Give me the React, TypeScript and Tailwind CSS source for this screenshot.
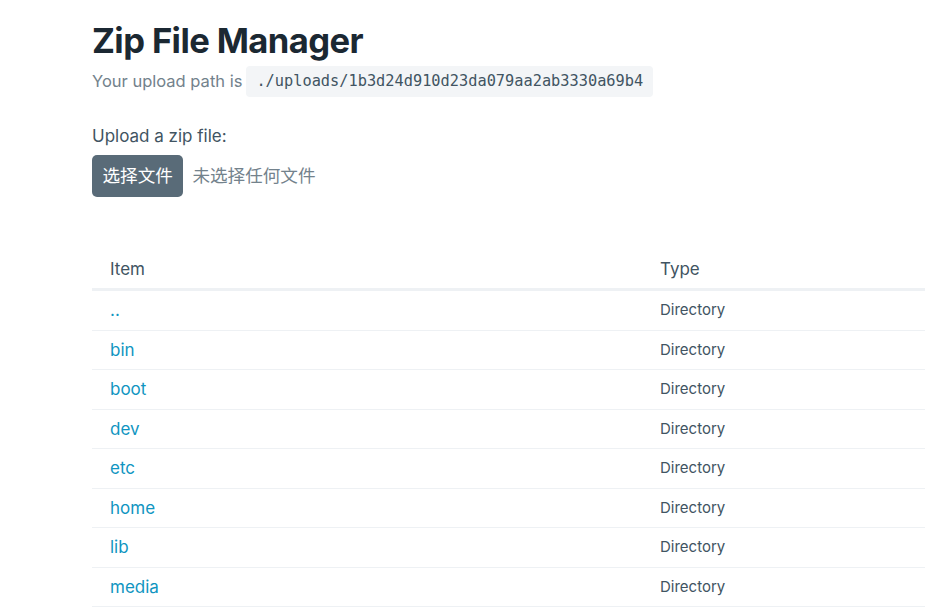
const rows = ["..", "bin", "boot", "dev", "etc", "home", "lib", "media"];

export default function App() {
  return (
    <div
      className="min-h-screen w-full overflow-hidden bg-white text-[#415462]"
      style={{ fontFamily: 'Inter, "Noto Sans CJK SC", sans-serif' }}
    >
      <div className="w-[940px] pl-[92px] pt-[16px]">
        <h1 className="text-[34.6px] font-bold leading-[48px] tracking-[-0.6px] text-[#1b2832]">
          Zip File Manager
        </h1>
        <p className="mt-[2px] flex items-center text-[16.5px] text-[#73828c]">
          Your upload path is
          <code
            className="ml-[4px] rounded-[4px] bg-[#f3f5f7] px-[10px] py-[4px] text-[15.3px] text-[#415462]"
            style={{ fontFamily: '"DejaVu Sans Mono", monospace' }}
          >
            ./uploads/1b3d24d910d23da079aa2ab3330a69b4
          </code>
        </p>

        <form className="mt-[26px]">
          <label className="block text-[17px] leading-[26px] text-[#415462]">
            Upload a zip file:
          </label>
          <div className="mt-[6px] flex items-center">
            <span className="flex h-[42px] items-center rounded-[5px] bg-[#596b78] px-[10.5px] text-[17.6px] text-white">
              选择文件
            </span>
            <span className="ml-[9px] text-[17.6px] text-[#73828c]">未选择任何文件</span>
          </div>
        </form>

        <table className="mt-[53px] w-[880px] border-collapse text-left">
          <thead>
            <tr className="border-b-[3px] border-[#eef1f4]">
              <th className="w-[550px] px-[18px] py-[8px] text-[17px] font-normal leading-[22.5px] text-[#415462]">
                Item
              </th>
              <th className="px-[18px] py-[8px] text-[17px] font-normal leading-[22.5px] text-[#415462]">
                Type
              </th>
            </tr>
          </thead>
          <tbody>
            {rows.map((name) => (
              <tr key={name} className="border-b border-[#eef1f4]">
                <td className="px-[18px] py-[8px] text-[17px] leading-[22.5px]">
                  <a href="#" className="text-[#1095c1]">
                    {name}
                  </a>
                </td>
                <td className="px-[18px] py-[8px] text-[15px] leading-[22.5px] text-[#415462]">
                  Directory
                </td>
              </tr>
            ))}
          </tbody>
        </table>
      </div>
    </div>
  );
}
